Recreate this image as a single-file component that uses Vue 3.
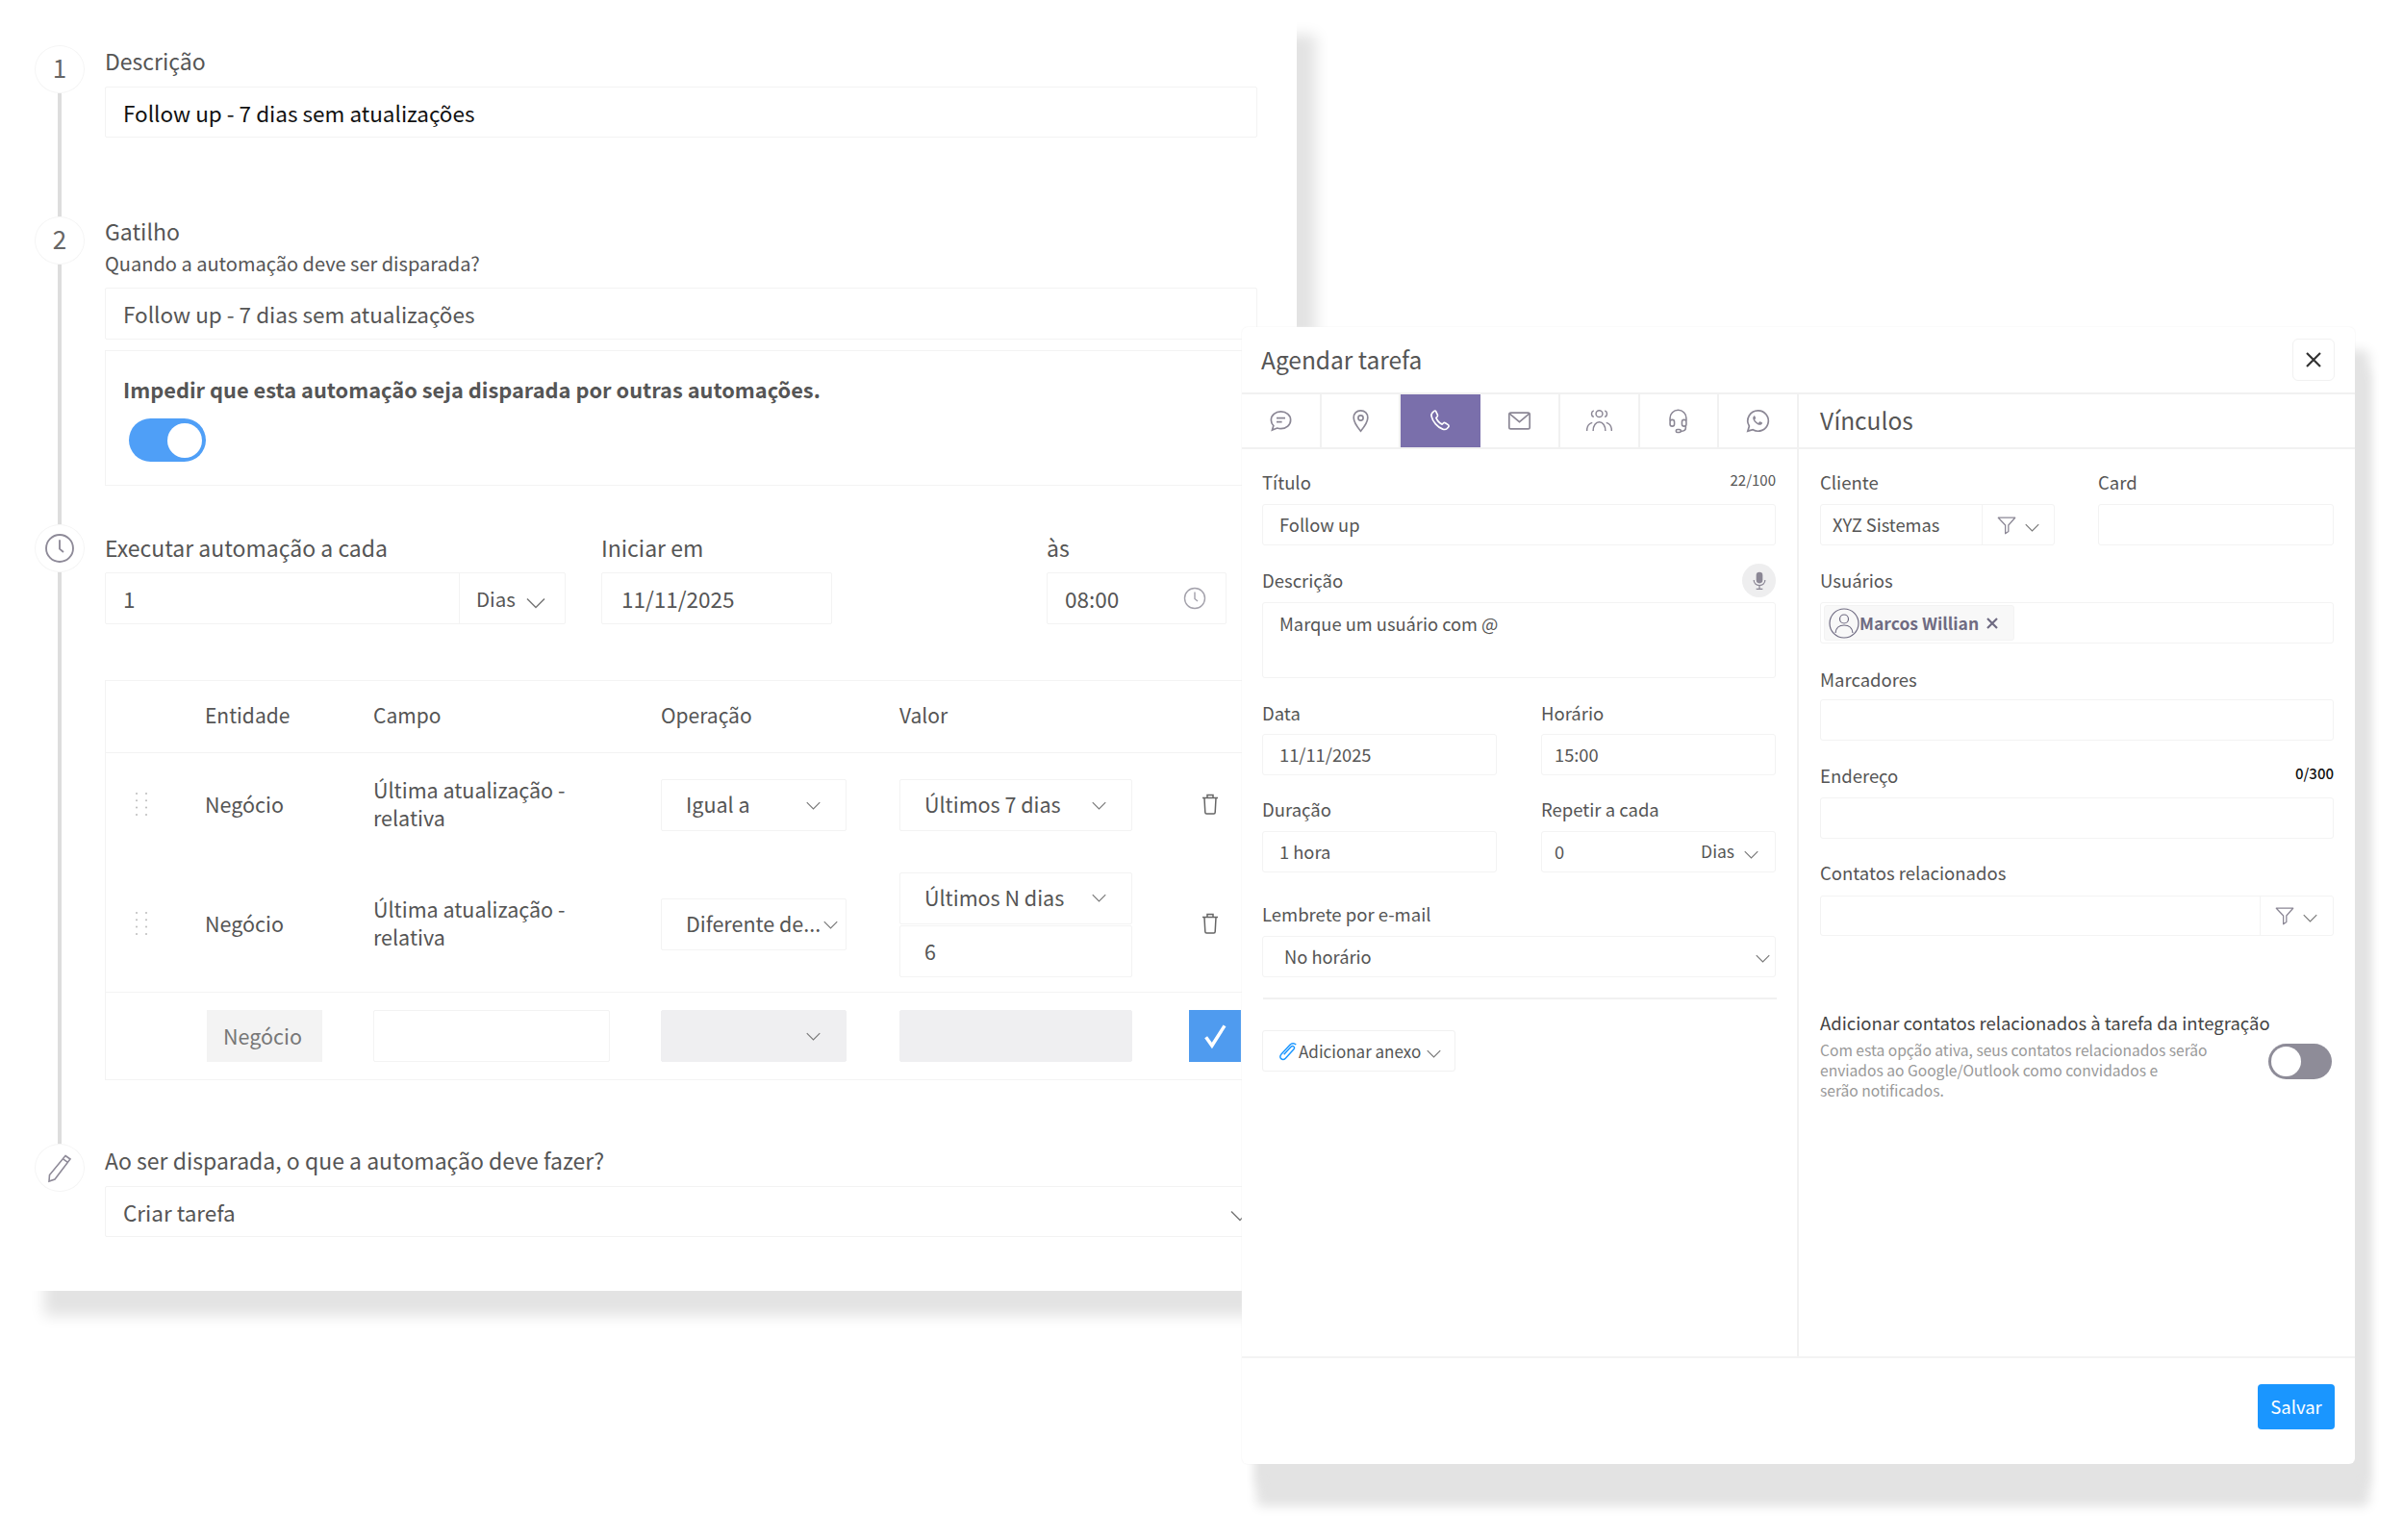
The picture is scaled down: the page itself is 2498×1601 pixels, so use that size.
<template>
  <div class="page">
    <!-- sprite dos ícones -->
    <svg class="sprite" aria-hidden="true">
      <symbol id="chev" viewBox="0 0 20 12"><path d="M1 1.5 10 10.5 19 1.5" fill="none" stroke="currentColor" stroke-width="1.5" /></symbol>
      <symbol id="clock" viewBox="0 0 24 24"><g fill="none" stroke="currentColor" stroke-width="1.4"><circle cx="12" cy="12" r="10.5" /><path d="M12 5.5V12.5l3 2.5" /></g></symbol>
      <symbol id="trash" viewBox="0 0 20 24"><g fill="none" stroke="currentColor" stroke-width="1.5"><path d="M2 5.500h16M7 5.500V2.500h6v3M4 5.500l.8 15c0 .9.6 1.500 1.500 1.500h7.400c.9 0 1.500-.6 1.500-1.500l.8-15" /></g></symbol>
      <symbol id="filter" viewBox="0 0 24 24"><path d="M2.500 3.500h19l-7.500 8.500v7l-3.500 2.500v-9.500z" fill="none" stroke="currentColor" stroke-width="1.400" stroke-linejoin="round" /></symbol>
      <symbol id="chat" viewBox="0 0 24 24"><g fill="none" stroke="currentColor" stroke-width="1.500"><path d="M12 3.500c-5 0-9 3.400-9 7.800 0 2 .8 3.800 2.200 5.200L4 20.500l4.600-1.800c1.100.4 2.200.6 3.400.6 5 0 9-3.500 9-8s-4-7.800-9-7.800z" /><path d="M8 9.500h8M8 13h5" /></g></symbol>
      <symbol id="pin" viewBox="0 0 24 24"><g fill="none" stroke="currentColor" stroke-width="1.500"><path d="M12 2.500c-3.800 0-6.500 2.900-6.500 6.500C5.500 13.500 12 21.500 12 21.500S18.500 13.500 18.500 9c0-3.600-2.700-6.500-6.500-6.500z" /><circle cx="12" cy="9.300" r="2.300" /></g></symbol>
      <symbol id="phone" viewBox="0 0 24 24"><path d="M7 3 5.300 4.500c-1 1-1 2.300-.7 3.600 1 4.500 5.600 10 10.300 11.600 1.600.5 3 .4 4-.6l1.200-1.300c.6-.7.500-1.600-.2-2.100l-2.600-1.700c-.7-.4-1.400-.3-1.900.2l-1 1c-2.400-1-4.600-3.400-5.600-6l1-1c.5-.6.6-1.300.2-1.900L8.600 3.200C8.200 2.600 7.500 2.500 7 3z" fill="none" stroke="currentColor" stroke-width="1.500" /></symbol>
      <symbol id="mail" viewBox="0 0 24 24"><g fill="none" stroke="currentColor" stroke-width="1.500"><rect x="2.500" y="4.500" width="19" height="15" rx="1.500" /><path d="M3 5.500l9 7.500 9-7.500" /></g></symbol>
      <symbol id="people" viewBox="1 1.500 22 22"><g fill="none" stroke="currentColor" stroke-width="1.200"><circle cx="12" cy="6.500" r="2.800" /><path d="M7.300 3.800a2.900 2.900 0 0 0 0 5.400M16.700 3.800a2.900 2.900 0 0 1 0 5.400" /><path d="M6.800 21c0-4.500 2.300-7.500 5.200-7.500s5.200 3 5.200 7.500" /><path d="M1.500 21c0-4 1.700-6.300 4.600-7M22.500 21c0-4-1.700-6.300-4.600-7" /></g></symbol>
      <symbol id="headset" viewBox="0 0 24 24"><g fill="none" stroke="currentColor" stroke-width="1.400"><path d="M4.500 12V9.500a7.500 7.500 0 0 1 15 0V12" /><rect x="4.500" y="11" width="4" height="6" rx="2" /><rect x="15.500" y="11" width="4" height="6" rx="2" /><path d="M19 16.500v1.800c0 2-1.500 3.200-3.500 3.200H14" /><rect x="10" y="20" width="4.500" height="2.600" rx="1.300" /></g></symbol>
      <symbol id="whats" viewBox="0 0 24 24"><path d="M12 2.500a9.500 9.500 0 0 0-8.100 14.400L2.500 21.500l4.800-1.300A9.500 9.500 0 1 0 12 2.500z" fill="none" stroke="currentColor" stroke-width="1.500" /><path d="M9 7.300c-.3 0-.7.1-1 .5-.4.5-.9 1.200-.6 2.400.4 1.600 1.600 3.200 3 4.300 1.400 1.100 2.800 1.500 3.900 1.300.9-.2 1.600-.9 1.700-1.500.1-.3 0-.6-.2-.7l-1.900-.9c-.2-.1-.5 0-.6.2l-.7.9c-.2.2-.4.2-.6.1-1.200-.5-2.300-1.600-2.900-2.800-.1-.2 0-.4.100-.5l.6-.8c.1-.2.1-.4 0-.6l-.8-1.800c-.1-.2-.3-.2-.6-.1z" fill="currentColor" /></symbol>
      <symbol id="mic" viewBox="0 0 24 24"><rect x="8" y="1.500" width="8" height="14" rx="4" fill="currentColor" /><path d="M5 11.500c0 4 3 6.500 7 6.500s7-2.500 7-6.500M12 18v4M8 22.500h8" fill="none" stroke="currentColor" stroke-width="1.500" /></symbol>
      <symbol id="clip" viewBox="0 0 24 24"><path d="M21 4.500c-1.900-2.200-4.900-2-6.900.1L4.300 15.200c-1.600 1.700-1.600 3.800-.2 5.100 1.400 1.300 3.500 1.100 5-.5l9.400-10.200c.9-1 .9-2.300-.1-3.100-.9-.8-2.200-.6-3.100.3l-8 8.700" fill="none" stroke="currentColor" stroke-width="1.600" /></symbol>
      <symbol id="user" viewBox="0 0 32 32"><g fill="none" stroke="currentColor" stroke-width="1.200"><circle cx="16" cy="16" r="15" /><circle cx="16" cy="11.500" r="4.500" /><path d="M7 26c.5-5 4-8 9-8s8.500 3 9 8" /></g></symbol>
      <symbol id="pencil" viewBox="0 0 28 32"><g fill="none" stroke="currentColor" stroke-width="1.600"><path d="M20 3.500 25 7 9 28l-6 2 .5-6.500z" /><path d="M17.500 6.800l5 3.600" /></g></symbol>
      <symbol id="dots" viewBox="0 0 14 26"><g fill="currentColor"><circle cx="2" cy="2" r="1" /><circle cx="12" cy="2" r="1" /><circle cx="2" cy="9.300" r="1" /><circle cx="12" cy="9.300" r="1" /><circle cx="2" cy="16.600" r="1" /><circle cx="12" cy="16.600" r="1" /><circle cx="2" cy="24" r="1" /><circle cx="12" cy="24" r="1" /></g></symbol>
    </svg>

    <section class="panel">
      <!-- passo 1 -->
      <div class="step step-1">
        <div class="rail">
          <span class="marker num">1</span>
          <span class="rail-line"></span>
        </div>
        <div class="step-body">
          <div class="lbl">Descrição</div>
          <div class="fld fld-big strong">Follow up - 7 dias sem atualizações</div>
        </div>
      </div>

      <!-- passo 2 -->
      <div class="step step-2">
        <div class="rail">
          <span class="marker num">2</span>
          <span class="rail-line"></span>
        </div>
        <div class="step-body">
          <div class="lbl">Gatilho</div>
          <div class="sub">Quando a automação deve ser disparada?</div>
          <div class="fld fld-big">Follow up - 7 dias sem atualizações</div>
          <div class="block-check">
            <div class="bold-line">Impedir que esta automação seja disparada por outras automações.</div>
            <div class="toggle on"><i></i></div>
          </div>
        </div>
      </div>

      <!-- passo 3 -->
      <div class="step step-3">
        <div class="rail">
          <span class="marker"><svg class="marker-ico"><use href="#clock" /></svg></span>
          <span class="rail-line"></span>
        </div>
        <div class="step-body">
          <div class="sched">
            <div>
              <div class="lbl">Executar automação a cada</div>
              <div class="fld fld-big w-every">
                <span class="grow">1</span>
                <span class="addon">Dias <svg class="chev-lg"><use href="#chev" /></svg></span>
              </div>
            </div>
            <div>
              <div class="lbl">Iniciar em</div>
              <div class="fld fld-big w-date">11/11/2025</div>
            </div>
            <div>
              <div class="lbl">às</div>
              <div class="fld fld-big w-time">
                <span class="grow">08:00</span>
                <svg class="clock-ico"><use href="#clock" /></svg>
              </div>
            </div>
          </div>

          <div class="tbl">
            <div class="tr tr-head">
              <span></span><span>Entidade</span><span>Campo</span><span>Operação</span><span>Valor</span><span></span>
            </div>
            <div v-for="r in rows" :key="r.op" class="tr" :class="r.cls">
              <svg class="drag"><use href="#dots" /></svg>
              <span>Negócio</span>
              <span class="campo">Última atualização -<br />relativa</span>
              <div class="sel sel-op"><span class="ell">{{ r.op }}</span><svg class="chev-sm"><use href="#chev" /></svg></div>
              <div class="val-stack">
                <div class="sel"><span>{{ r.val }}</span><svg class="chev-sm"><use href="#chev" /></svg></div>
                <div v-if="r.extra" class="sel">{{ r.extra }}</div>
              </div>
              <svg class="trash"><use href="#trash" /></svg>
            </div>
            <div class="tr tr-new">
              <span></span>
              <div class="neg-box">Negócio</div>
              <div class="sel empty-campo"></div>
              <div class="sel sel-off"><span></span><svg class="chev-sm"><use href="#chev" /></svg></div>
              <div class="sel sel-off sel-wide"></div>
              <button class="ok-btn">
                <svg viewBox="0 0 24 24" width="30" height="30"><path d="M4.500 13 9.500 20 20 3.500" fill="none" stroke="#fff" stroke-width="2.800" /></svg>
              </button>
            </div>
          </div>
        </div>
      </div>

      <!-- passo 4 -->
      <div class="step step-4">
        <div class="rail">
          <span class="marker"><svg class="marker-ico"><use href="#pencil" /></svg></span>
        </div>
        <div class="step-body">
          <div class="lbl">Ao ser disparada, o que a automação deve fazer?</div>
          <div class="fld fld-big">
            <span class="grow">Criar tarefa</span>
            <svg class="chev-lg chev-action"><use href="#chev" /></svg>
          </div>
        </div>
      </div>
    </section>

    <!-- modal Agendar tarefa -->
    <aside class="modal">
      <header class="m-head">
        <h2>Agendar tarefa</h2>
        <button class="close">
          <svg viewBox="0 0 20 20" width="20" height="20"><path d="M3 3 17 17M17 3 3 17" stroke="#333" stroke-width="2.200" fill="none" /></svg>
        </button>
      </header>
      <div class="m-body">
        <div class="m-left">
          <div class="tabs">
            <div v-for="t in tabs" :key="t" class="tab" :class="{ active: t === 'phone' }">
              <svg><use :href="'#' + t" /></svg>
            </div>
          </div>
          <div class="form">
            <div class="f-lbl lbl-row"><span>Título</span><small>22/100</small></div>
            <div class="inp">Follow up</div>

            <div class="f-lbl lbl-row mt23">
              <span>Descrição</span>
              <span class="mic"><svg><use href="#mic" /></svg></span>
            </div>
            <div class="inp area">Marque um usuário com @</div>

            <div class="two mt23">
              <div>
                <div class="f-lbl">Data</div>
                <div class="inp mt-1">11/11/2025</div>
              </div>
              <div>
                <div class="f-lbl">Horário</div>
                <div class="inp inp-r mt-1">15:00</div>
              </div>
            </div>
            <div class="two mt22">
              <div>
                <div class="f-lbl">Duração</div>
                <div class="inp">1 hora</div>
              </div>
              <div>
                <div class="f-lbl">Repetir a cada</div>
                <div class="inp inp-r inp-repeat">
                  <span class="grow">0</span>
                  <span class="dias">Dias</span>
                  <svg class="chev-md"><use href="#chev" /></svg>
                </div>
              </div>
            </div>

            <div class="f-lbl mt30">Lembrete por e-mail</div>
            <div class="inp inp-select">
              <span class="grow">No horário</span>
              <svg class="chev-md"><use href="#chev" /></svg>
            </div>

            <hr class="sep" />

            <button class="attach">
              <svg class="clip"><use href="#clip" /></svg>
              <span>Adicionar anexo</span>
              <svg class="chev-md"><use href="#chev" /></svg>
            </button>
          </div>
        </div>

        <div class="m-right">
          <div class="r-title">Vínculos</div>
          <div class="form form-r">
            <div class="two-r">
              <div>
                <div class="f-lbl">Cliente</div>
                <div class="inp inp-addon">
                  <span class="grow">XYZ Sistemas</span>
                  <span class="filter-addon">
                    <svg class="filter"><use href="#filter" /></svg>
                    <svg class="chev-md"><use href="#chev" /></svg>
                  </span>
                </div>
              </div>
              <div>
                <div class="f-lbl">Card</div>
                <div class="inp"></div>
              </div>
            </div>

            <div class="f-lbl mt23">Usuários</div>
            <div class="inp inp-chips">
              <span class="chip">
                <svg class="avatar"><use href="#user" /></svg>
                <b>Marcos Willian</b>
                <svg viewBox="0 0 12 12" width="12" height="12" class="chip-x"><path d="M1 1 11 11M11 1 1 11" stroke="currentColor" stroke-width="2.200" fill="none" /></svg>
              </span>
            </div>

            <div class="f-lbl mt24 lbl-tight">Marcadores</div>
            <div class="inp"></div>

            <div class="f-lbl lbl-row mt23"><span>Endereço</span><small class="count-dark">0/300</small></div>
            <div class="inp"></div>

            <div class="f-lbl mt22 lbl-loose">Contatos relacionados</div>
            <div class="inp inp-addon inp-42">
              <span class="grow"></span>
              <span class="filter-addon filter-addon-wide">
                <svg class="filter"><use href="#filter" /></svg>
                <svg class="chev-md"><use href="#chev" /></svg>
              </span>
            </div>

            <div class="integ-title">Adicionar contatos relacionados à tarefa da integração</div>
            <div class="integ-row">
              <p>Com esta opção ativa, seus contatos relacionados serão<br />enviados ao Google/Outlook como convidados e<br />serão notificados.</p>
              <div class="toggle off"><i></i></div>
            </div>
          </div>
        </div>
      </div>
      <footer class="m-foot">
        <button class="save">Salvar</button>
      </footer>
    </aside>
  </div>
</template>

<script setup>
const tabs = ['chat', 'pin', 'phone', 'mail', 'people', 'headset', 'whats']

const rows = [
  { cls: 'tr-a', op: 'Igual a', val: 'Últimos 7 dias' },
  { cls: 'tr-b', op: 'Diferente de...', val: 'Últimos N dias', extra: '6' },
]
</script>

<style scoped>
.page {
  position: relative;
  width: 2498px;
  height: 1601px;
  overflow: hidden;
  background: #fff;
  color: #555;
  font-family: "Noto Sans CJK SC", "Noto Sans", sans-serif;
}
.sprite { position: absolute; width: 0; height: 0; }

/* painel da automação */
.panel {
  box-sizing: border-box;
  width: 1322px;
  height: 1332px;
  margin: 10px 0 0 26px;
  padding-top: 37px;
  background: #fff;
  box-shadow: 20px 26px 14px #e3e3e3;
}
.step { display: flex; }
.step-1 { height: 178px; }
.step-2 { height: 320px; }
.step-3 { height: 644px; }
.rail {
  flex: 0 0 72px;
  margin-right: 11px;
  display: flex;
  flex-direction: column;
  align-items: center;
}
.marker {
  flex: 0 0 50px;
  width: 52px;
  box-sizing: border-box;
  display: flex;
  align-items: center;
  justify-content: center;
  border: 1px solid #f5f5f5;
  border-radius: 50%;
  font-size: 26px;
  color: #666;
}
.marker.num { padding-bottom: 6px; }
.marker-ico { width: 32px; height: 32px; color: #8e8a98; }
.rail-line { flex: 1; width: 4px; background: #ddd; }
.step-body { width: 1198px; }
.lbl { font-size: 23px; line-height: 32px; }
.step-2 .lbl { line-height: 30px; }
.sub { font-size: 20px; line-height: 30px; margin-top: 4px; }
.fld {
  box-sizing: border-box;
  display: flex;
  align-items: center;
  border: 1px solid #f3f3f3;
  border-radius: 2px;
}
.fld-big { height: 53px; padding-left: 18px; font-size: 22.5px; margin-top: 11px; }
.strong { color: #111; }
.step-2 .sub + .fld { margin-top: 10px; height: 54px; }
.block-check {
  box-sizing: border-box;
  height: 141px;
  margin-top: 11px;
  padding: 22px 18px 0;
  border: 1px solid #f3f3f3;
}
.bold-line { font-size: 21.8px; font-weight: 700; line-height: 36px; }
.toggle { display: flex; align-items: center; box-sizing: border-box; }
.toggle i { display: block; background: #fff; border-radius: 50%; }
.toggle.on {
  width: 80px; height: 45px;
  margin: 12px 0 0 6px;
  padding-right: 4px;
  justify-content: flex-end;
  background: #4f9ff7;
  border-radius: 23px;
}
.toggle.on i { width: 36px; height: 36px; }
.toggle.off {
  flex: none;
  width: 66px; height: 37px;
  margin-top: 4px;
  padding-left: 3px;
  background: #8e8c98;
  border-radius: 19px;
}
.toggle.off i { width: 31px; height: 31px; }

.step-3 .step-body { padding-top: 8px; }
.sched { display: grid; grid-template-columns: 516px 463px 187px; }
.sched .fld-big { margin-top: 10px; height: 54px; }
.w-every { width: 479px; }
.w-date { width: 240px; padding-left: 20px; }
.w-time { width: 187px; }
.grow { flex: 1; }
.addon {
  display: flex;
  align-items: center;
  align-self: stretch;
  width: 110px;
  box-sizing: border-box;
  padding-left: 17px;
  border-left: 1px solid #f3f3f3;
  font-size: 20.5px;
}
.chev-lg { width: 20px; height: 12px; margin: 9px 0 0 11px; color: #777; }
.clock-ico { width: 24px; height: 24px; margin-right: 20px; color: #a3a1ab; }

/* tabela de condições */
.tbl {
  box-sizing: border-box;
  height: 416px;
  margin-top: 58px;
  border: 1px solid #f3f3f3;
  font-size: 21.5px;
}
.tr {
  display: grid;
  grid-template-columns: 103px 175px 299px 248px 242px 1fr;
  align-items: center;
}
.tr-head { height: 74px; border-bottom: 1px solid #f3f3f3; font-size: 21px; }
.tr-head span { padding-bottom: 4px; }
.tr-a { height: 108px; }
.tr-b { height: 140px; border-bottom: 1px solid #f3f3f3; }
.tr-new { height: 90px; }
.tr-a > span, .tr-b > span { padding-bottom: 4px; }
.drag { width: 14px; height: 26px; margin: 0 0 2px 30px; color: #bbb; }
.campo { line-height: 29px; }
.sel {
  box-sizing: border-box;
  height: 54px;
  display: flex;
  align-items: center;
  justify-content: space-between;
  padding: 0 26px 0 25px;
  border: 1px solid #f3f3f3;
  border-radius: 2px;
}
.sel > span { padding-bottom: 3px; }
.sel-op { width: 193px; }
.val-stack { width: 242px; }
.val-stack .sel + .sel { margin-top: 1px; justify-content: flex-start; }
.tr-b .sel-op { padding-right: 0; }
.tr-b .sel-op .ell { white-space: nowrap; }
.chev-sm { flex: none; width: 15px; height: 9px; color: #777; }
.tr-b .sel-op .chev-sm { margin-right: 8px; }
.trash { width: 20px; height: 24px; margin: 0 0 2px 71px; color: #666; }
.neg-box {
  width: 120px;
  height: 54px;
  margin-left: 2px;
  padding: 0 0 2px 17px;
  display: flex;
  align-items: center;
  box-sizing: border-box;
  background: #f3f3f3;
  color: #777;
}
.empty-campo { width: 246px; }
.sel-off { width: 193px; background: #efeff1; border-color: #efeff1; }
.sel-wide { width: 242px; }
.ok-btn {
  width: 54px;
  height: 54px;
  margin-left: 59px;
  padding: 0;
  display: flex;
  align-items: center;
  justify-content: center;
  border: 0;
  background: #4f9bef;
}

.step-4 .step-body { padding-top: 1px; }
.step-4 .fld-big { margin-top: 11px; }
.chev-action { margin: 9px 7px 0 0; }

/* modal */
.modal {
  position: absolute;
  left: 1291px;
  top: 340px;
  width: 1157px;
  height: 1182px;
  display: flex;
  flex-direction: column;
  box-sizing: border-box;
  background: #fff;
  border-radius: 6px;
  box-shadow: 15px 24px 12px #e3e3e3, 15px 44px 12px #e3e3e3, 0 0 2px #eee;
}
.m-head {
  flex: 0 0 70px;
  box-sizing: border-box;
  display: flex;
  align-items: center;
  justify-content: space-between;
  padding: 0 21px 0 20px;
  border-bottom: 2px solid #f1f1f1;
}
.m-head h2 { margin: 0 0 2px; font-size: 24.5px; font-weight: 400; }
.close {
  width: 44px;
  height: 44px;
  padding: 0;
  display: flex;
  align-items: center;
  justify-content: center;
  background: #fff;
  border: 1px solid #f1f1f1;
  border-radius: 6px;
}
.m-body { flex: 1; display: flex; border-bottom: 2px solid #f3f3f3; }
.m-left { flex: 0 0 579px; border-right: 2px solid #f1f1f1; box-sizing: border-box; }
.m-right { flex: 1; min-width: 0; }
.tabs { display: flex; height: 55px; border-bottom: 2px solid #f1f1f1; box-sizing: content-box; }
.tab {
  flex: 1;
  display: flex;
  align-items: center;
  justify-content: center;
  border-right: 2px solid #f1f1f1;
  color: #8b8795;
}
.tab:last-child { border-right: 0; }
.tab svg { width: 27px; height: 27px; }
.tab.active { background: #7a6fab; color: #fff; border-right-color: transparent; }
.form { padding: 21px 22px 0 21px; }
.form-r { padding: 21px 22px 0 22px; }
.f-lbl { font-size: 18.5px; line-height: 26px; margin-bottom: 10px; }
.lbl-row { display: flex; justify-content: space-between; align-items: flex-start; height: 26px; }
.lbl-row small { font-size: 15px; color: #555; margin-top: -2px; }
.count-dark { color: #111 !important; font-weight: 500; }
.mt22 { margin-top: 22px; }
.mt23 { margin-top: 23px; }
.mt24 { margin-top: 24px; }
.mt30 { margin-top: 30px; }
.mt-1 { margin-top: -1px; }
.lbl-tight { margin-bottom: 8px; }
.lbl-loose { margin-bottom: 11px; }
.inp {
  box-sizing: border-box;
  display: flex;
  align-items: center;
  height: 43px;
  padding: 0 10px 2px 17px;
  border: 1px solid #f3f3f3;
  border-radius: 3px;
  font-size: 18.3px;
}
.inp-r { padding-left: 13px; }
.area { height: 79px; align-items: flex-start; padding-top: 8px; }
.mic {
  width: 35px;
  height: 35px;
  margin-top: -4px;
  display: flex;
  align-items: center;
  justify-content: center;
  background: #eeeeef;
  border-radius: 50%;
}
.mic svg { width: 20px; height: 21px; color: #8b8795; }
.two { display: grid; grid-template-columns: 244px 244px; column-gap: 46px; }
.inp-repeat { padding-right: 17px; }
.dias { margin-right: 10px; font-size: 17.5px; }
.chev-md { flex: none; width: 15px; height: 9px; margin-top: 5px; color: #777; }
.inp-repeat .chev-md { margin-top: 7px; }
.inp-select { padding: 0 5px 2px 22px; }
.sep { margin: 21px -1px 32px 1px; border: 0; border-top: 2px solid #f1f1f1; }
.attach {
  display: flex;
  align-items: center;
  width: 201px;
  height: 43px;
  padding: 0 0 0 15px;
  background: #fff;
  border: 1px solid #f1f1f1;
  border-radius: 3px;
  font: inherit;
  font-size: 17px;
  color: #555;
  box-sizing: border-box;
  white-space: nowrap;
}
.clip { flex: none; width: 22px; height: 22px; color: #1a96ff; }
.attach .chev-md { margin-left: 6px; }
.r-title {
  padding: 0 22px 2px;
  display: flex;
  align-items: center;
  font-size: 24.5px;
  border-bottom: 2px solid #f1f1f1;
  box-sizing: border-box;
  height: 57px;
}
.two-r { display: grid; grid-template-columns: 244px 245px; column-gap: 45px; }
.inp-addon { padding-right: 0; padding-left: 12px; }
.filter-addon {
  align-self: stretch;
  flex: 0 0 75px;
  box-sizing: border-box;
  display: flex;
  align-items: center;
  padding-left: 14px;
  margin-bottom: -2px;
  border-left: 1px solid #f3f3f3;
}
.filter-addon-wide { flex-basis: 76px; }
.filter { width: 22px; height: 22px; color: #8b8795; margin-right: 8px; }
.inp-42 { height: 42px; }
.inp-chips { padding: 0 3px; }
.chip {
  display: flex;
  align-items: center;
  width: 198px;
  height: 37px;
  box-sizing: border-box;
  padding-left: 4px;
  background: #f8f8f8;
  border: 1px solid #f3f3f3;
  border-radius: 3px;
  color: #6f6b82;
}
.avatar { width: 32px; height: 32px; flex: none; }
.chip b { font-size: 17.5px; font-weight: 700; white-space: nowrap; }
.chip-x { margin-left: 8px; flex: none; }
.integ-title { margin-top: 76px; font-size: 18.5px; line-height: 28px; color: #444; }
.integ-row { display: flex; justify-content: space-between; align-items: flex-start; margin-top: 4px; }
.integ-row p { margin: 0; font-size: 15.6px; line-height: 21px; color: #999; }
.integ-row .toggle { margin-right: 2px; }
.m-foot {
  flex: 0 0 110px;
  box-sizing: border-box;
  display: flex;
  justify-content: flex-end;
  padding: 27px 21px 0 0;
}
.save {
  width: 80px;
  height: 47px;
  padding: 0 0 2px;
  border: 0;
  border-radius: 4px;
  background: #1a96ff;
  color: #fff;
  font: inherit;
  font-size: 18.5px;
}
</style>

<style>
html, body { background: #fff; }
</style>
